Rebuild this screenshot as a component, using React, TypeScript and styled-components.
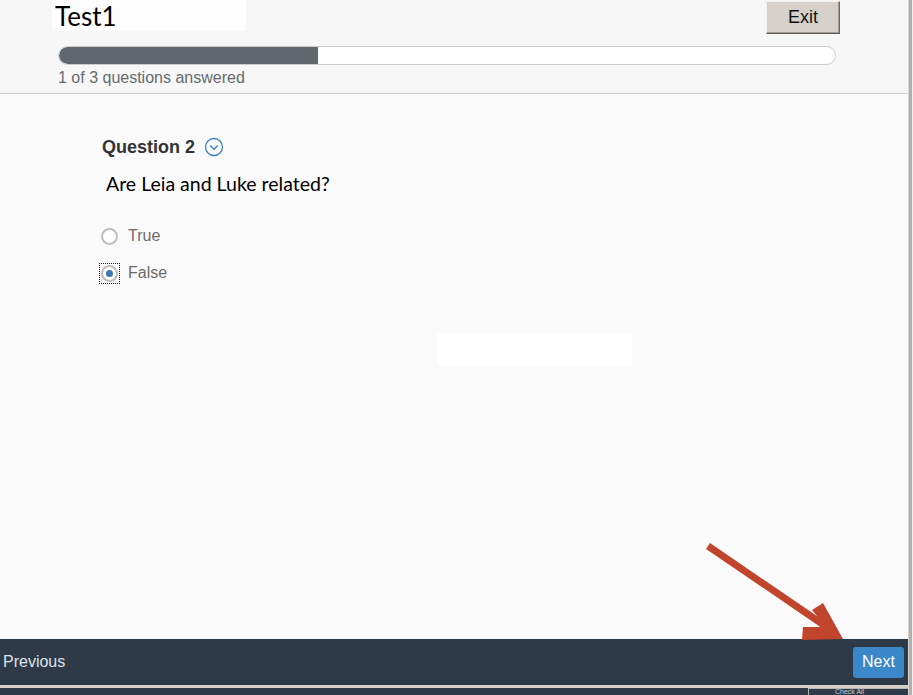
import React from "react";
import styled, { createGlobalStyle } from "styled-components";

const Global = createGlobalStyle`
  html, body { margin: 0; padding: 0; background: #fafafa; }
  body { font-family: "Liberation Sans", Arial, sans-serif; }
  * { box-sizing: border-box; }
`;

const Frame = styled.div`
  position: relative;
  width: 913px;
  height: 695px;
  display: flex;
  overflow: hidden;
`;

const Main = styled.div`
  width: 908px;
  display: flex;
  flex-direction: column;
`;

const RightEdge = styled.div`
  width: 5px;
  display: flex;
  background: linear-gradient(to right, #d6d6d6 0 1px, #b4b0a8 1px 4px, #f0f0f0 4px);
`;

const Header = styled.header`
  height: 94px;
  background: #f7f7f7;
  border-bottom: 1px solid #cfcfcf;
  display: flex;
  flex-direction: column;
  padding: 0 68px 0 52px;
`;

const TopRow = styled.div`
  display: flex;
  justify-content: space-between;
  align-items: flex-start;
  height: 46px;
`;

const TitleBox = styled.div`
  width: 194px;
  height: 31px;
  background: #fdfdfd;
  padding: 1px 0 0 3px;
  font-family: Lato, "Open Sans", sans-serif;
  font-size: 26px;
  line-height: 30px;
  color: #000;
`;

const ExitButton = styled.button`
  margin-top: 1px;
  width: 74px;
  height: 33px;
  background: #d6d2cb;
  border: 1px solid;
  border-color: #f2f0ec #6f6c67 #5a5752 #f2f0ec;
  box-shadow: inset -1px -1px 0 #a09c95;
  font-family: "Liberation Sans", Arial, sans-serif;
  font-size: 18px;
  color: #111;
  padding: 0;
`;

const ProgressTrack = styled.div`
  margin-left: 6px;
  width: 778px;
  height: 19px;
  border: 1px solid #cccccc;
  border-radius: 10px;
  background: #ffffff;
  overflow: hidden;
  display: flex;
`;

const ProgressFill = styled.div`
  height: 100%;
  background: #5e686d;
  border-radius: 10px 0 0 10px;
`;

const ProgressText = styled.div`
  margin: 4px 0 0 6px;
  font-size: 16px;
  color: #666a6e;
`;

const Content = styled.main`
  flex: 1;
  background: #fafafa;
  padding: 42px 0 0 102px;
  display: flex;
  flex-direction: column;
`;

const QuestionHead = styled.div`
  display: flex;
  align-items: center;
  gap: 9px;
  font-weight: bold;
  font-size: 18px;
  color: #333;
  height: 22px;
`;

const QuestionText = styled.div`
  margin: 14px 0 0 4px;
  font-family: Lato, "Open Sans", sans-serif;
  font-size: 19.5px;
  color: #000;
`;

const Options = styled.div`
  margin-top: 30px;
  display: flex;
  flex-direction: column;
  gap: 15px;
`;

const Option = styled.label`
  display: flex;
  align-items: center;
  gap: 8px;
  font-size: 16px;
  color: #6b6b6b;
  height: 22px;
`;

const RadioWrap = styled.span<{ focused?: boolean }>`
  width: 21px;
  height: 21px;
  margin-left: -3px;
  display: flex;
  align-items: center;
  justify-content: center;
  border: 1px dotted ${(p) => (p.focused ? "#222" : "transparent")};
`;

const Radio = styled.span<{ checked?: boolean }>`
  width: 17px;
  height: 17px;
  border-radius: 50%;
  border: 2px solid #bdbdbd;
  background: #fff;
  display: flex;
  align-items: center;
  justify-content: center;
  &::after {
    content: "";
    width: 7px;
    height: 7px;
    border-radius: 50%;
    background: ${(p) => (p.checked ? "#3b77b1" : "transparent")};
  }
`;

const WhiteBlock = styled.div`
  margin: 49px 0 0 335px;
  width: 195px;
  height: 32px;
  background: #ffffff;
`;

const Footer = styled.footer`
  height: 46px;
  background: #2e3a47;
  display: flex;
  align-items: center;
  justify-content: space-between;
  padding: 0 4px 0 3px;
`;

const PrevLink = styled.span`
  font-size: 16px;
  color: #dde3ea;
`;

const NextButton = styled.button`
  width: 51px;
  height: 31px;
  border: none;
  border-radius: 3px;
  background: #3a87c9;
  color: #fff;
  font-family: "Liberation Sans", Arial, sans-serif;
  font-size: 16px;
  padding: 0;
`;

const BottomStrip = styled.div`
  height: 10px;
  display: flex;
  flex-direction: column;
`;

const GreyLine = styled.div`
  height: 3px;
  background: #d4d0c8;
`;

const DarkLine = styled.div`
  flex: 1;
  background: #2e3a47;
  display: flex;
  justify-content: flex-end;
`;

const CheckBox = styled.div`
  width: 100px;
  height: 100%;
  background: #2e3a47;
  border-left: 1px solid #b5b5b5;
  border-top: 1px solid #b5b5b5;
  font-size: 7px;
  line-height: 6px;
  color: #c8ccd2;
  padding-left: 26px;
  white-space: nowrap;
`;

const ArrowLayer = styled.svg`
  position: absolute;
  left: 0;
  top: 0;
  pointer-events: none;
`;

const ChevronCircle = () => (
  <svg width="20" height="20" viewBox="0 0 20 20">
    <circle cx="10" cy="10" r="8.5" fill="none" stroke="#3d7fc4" strokeWidth="1.3" />
    <path d="M6.2 8.6 L10 12.2 L13.8 8.6" fill="none" stroke="#3d7fc4" strokeWidth="1.4" />
  </svg>
);

export default function App() {
  return (
    <Frame>
      <Global />
      <Main>
        <Header>
          <TopRow>
            <TitleBox>Test1</TitleBox>
            <ExitButton>Exit</ExitButton>
          </TopRow>
          <ProgressTrack>
            <ProgressFill style={{ width: `${(1 / 3) * 100}%` }} />
          </ProgressTrack>
          <ProgressText>1 of 3 questions answered</ProgressText>
        </Header>
        <Content>
          <QuestionHead>
            Question 2 <ChevronCircle />
          </QuestionHead>
          <QuestionText>Are Leia and Luke related?</QuestionText>
          <Options>
            <Option>
              <RadioWrap>
                <Radio />
              </RadioWrap>
              True
            </Option>
            <Option>
              <RadioWrap focused>
                <Radio checked />
              </RadioWrap>
              False
            </Option>
          </Options>
          <WhiteBlock />
        </Content>
        <Footer>
          <PrevLink>Previous</PrevLink>
          <NextButton>Next</NextButton>
        </Footer>
        <BottomStrip>
          <GreyLine />
          <DarkLine>
            <CheckBox>Check All</CheckBox>
          </DarkLine>
        </BottomStrip>
      </Main>
      <RightEdge />
      <ArrowLayer width="913" height="695">
        <line x1="708" y1="546" x2="834" y2="632" stroke="#c1452d" strokeWidth="7" />
        <polygon points="843,639 823,603 812,610 826,627 803,627 802,640" fill="#c1452d" />
      </ArrowLayer>
    </Frame>
  );
}
